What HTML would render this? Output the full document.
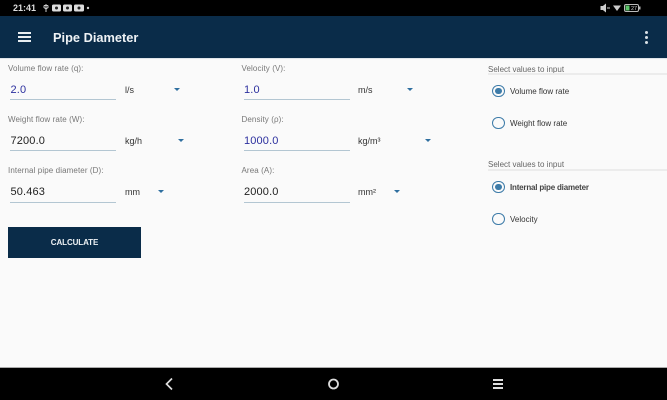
<!DOCTYPE html>
<html><head><meta charset="utf-8">
<style>
html,body{margin:0;padding:0}
body{width:667px;height:400px;position:relative;overflow:hidden;background:#000;font-family:"Liberation Sans",sans-serif}
#w{left:0;top:0;width:667px;height:400px;background:#fafafa;overflow:hidden;filter:blur(.35px)}
div,span{position:absolute;white-space:nowrap}
.lbl{font-size:8px;color:#777;line-height:10px;letter-spacing:.1px}
.val{font-size:11px;line-height:14px;color:#222;letter-spacing:.15px}
.blue{color:#2b2f9e}
.ul{height:1px;background:#b3c6d2;width:106px}
.unit{font-size:9px;line-height:12px;color:#333}
.tri{width:0;height:0;border-left:3.500px solid transparent;border-right:3.500px solid transparent;border-top:3.500px solid #2f6f9f}
.hd{font-size:8px;line-height:10px;color:#666;left:488px}
.line{left:488px;width:179px;height:2px;background:#ececec}
.r{left:492px;width:10.500px;height:10.500px;border:1.500px solid #3d7ba8;border-radius:50%}
.r i{position:absolute;left:2px;top:2px;width:6.500px;height:6.500px;border-radius:50%;background:#3d7ba8}
.rl{left:510px;font-size:8px;line-height:10px;color:#333}
</style></head><body>
<div id="w">
<div style="left:0;top:0;width:667px;height:16px;background:#000"></div>
<div style="left:13px;top:3px;font-size:9px;line-height:11px;color:#ddd;font-weight:bold">21:41</div>
<svg style="position:absolute;left:42px;top:3px" width="50" height="10" viewBox="0 0 50 10">
<path d="M4 1v8M2 2.500h4M2 2.500v2l2 1.500 2-1.500v-2" stroke="#ccc" stroke-width="1" fill="none"/>
<rect x="10" y="1.500" width="9" height="7" rx="1.500" fill="#ddd"/><rect x="21" y="1.500" width="9" height="7" rx="1.500" fill="#ddd"/><rect x="32" y="1.500" width="10" height="7" rx="1.500" fill="#ddd"/><circle cx="46" cy="5" r="1.200" fill="#ccc"/>
<circle cx="14.500" cy="5" r="1.500" fill="#222"/><circle cx="25.500" cy="5" r="1.500" fill="#222"/><circle cx="37" cy="5" r="1.500" fill="#222"/>
</svg>
<svg style="position:absolute;left:600px;top:3px" width="42" height="10" viewBox="0 0 42 10">
<path d="M1 3.500h2l2.500-2v7l-2.500-2h-2zM7 5h3" fill="#ccc" stroke="#ccc" stroke-width="1"/>
<path d="M13 2.500h8l-4 5.500z" fill="#ccc"/>
<rect x="24.500" y="1.500" width="14" height="7" rx="1.500" fill="none" stroke="#bbb"/><rect x="25.500" y="2.500" width="4" height="5" fill="#5cc56a"/><rect x="39" y="3.500" width="1.500" height="3" fill="#bbb"/>
<text x="31" y="7.200" font-size="5.500" fill="#ccc" font-family="Liberation Sans">27</text>
</svg>
<div style="left:0;top:16px;width:667px;height:42px;background:#0a2c49"></div>
<div style="left:0;top:58px;width:667px;height:1px;background:#dfe5ea"></div>
<div style="left:18px;top:32px;width:13px;height:2px;background:#e8edf0;box-shadow:0 4px 0 #e8edf0,0 8px 0 #e8edf0"></div>
<div style="left:53px;top:30px;font-size:12.800px;line-height:16px;font-weight:bold;color:#eef2f5">Pipe Diameter</div>
<div style="left:645px;top:31px;width:3px;height:3px;border-radius:50%;background:#d8e0e6;box-shadow:0 5px 0 #d8e0e6,0 10px 0 #d8e0e6"></div>

<div class="lbl" style="left:8px;top:64px">Volume flow rate (q):</div>
<div class="val blue" style="left:10.500px;top:83px">2.0</div>
<div class="ul" style="left:10px;top:99px"></div>
<div class="unit" style="left:125px;top:84px">l/s</div>
<div class="tri" style="left:174px;top:88px"></div>

<div class="lbl" style="left:8px;top:115px">Weight flow rate (W):</div>
<div class="val" style="left:10.500px;top:134px">7200.0</div>
<div class="ul" style="left:10px;top:150px"></div>
<div class="unit" style="left:125px;top:135px">kg/h</div>
<div class="tri" style="left:178px;top:139px"></div>

<div class="lbl" style="left:8px;top:166px">Internal pipe diameter (D):</div>
<div class="val" style="left:10.500px;top:185px">50.463</div>
<div class="ul" style="left:10px;top:202px"></div>
<div class="unit" style="left:125px;top:186px">mm</div>
<div class="tri" style="left:158px;top:190px"></div>

<div style="left:8px;top:227px;width:133px;height:31px;background:#0a2c49"></div>
<div style="left:8px;top:227px;width:133px;height:31px;text-align:center;font-size:8px;font-weight:bold;line-height:32px;color:#eef2f5;letter-spacing:-.1px">CALCULATE</div>

<div class="lbl" style="left:241.500px;top:64px">Velocity (V):</div>
<div class="val blue" style="left:244px;top:83px">1.0</div>
<div class="ul" style="left:244px;top:99px"></div>
<div class="unit" style="left:358px;top:84px">m/s</div>
<div class="tri" style="left:407px;top:88px"></div>

<div class="lbl" style="left:241.500px;top:115px">Density (ρ):</div>
<div class="val blue" style="left:244px;top:134px">1000.0</div>
<div class="ul" style="left:244px;top:150px"></div>
<div class="unit" style="left:358px;top:135px">kg/m³</div>
<div class="tri" style="left:425px;top:139px"></div>

<div class="lbl" style="left:241.500px;top:166px">Area (A):</div>
<div class="val" style="left:244px;top:185px">2000.0</div>
<div class="ul" style="left:244px;top:202px"></div>
<div class="unit" style="left:358px;top:186px">mm²</div>
<div class="tri" style="left:394px;top:190px"></div>

<div class="hd" style="top:64.500px">Select values to input</div>
<div class="line" style="top:73px"></div>
<div class="r" style="top:84.500px"><i></i></div>
<div class="rl" style="top:86.500px">Volume flow rate</div>
<div class="r" style="top:116.500px"></div>
<div class="rl" style="top:118.500px">Weight flow rate</div>

<div class="hd" style="top:160px">Select values to input</div>
<div class="line" style="top:169px"></div>
<div class="r" style="top:180.500px"><i></i></div>
<div class="rl" style="top:182.500px;font-weight:bold;letter-spacing:-.2px;color:#444">Internal pipe diameter</div>
<div class="r" style="top:212.500px"></div>
<div class="rl" style="top:214.500px">Velocity</div>

<div style="left:0;top:367px;width:667px;height:1px;background:#aaa"></div>
<div style="left:0;top:368px;width:667px;height:32px;background:#000"></div>
<svg style="position:absolute;left:160px;top:375px" width="350" height="18" viewBox="0 0 350 18">
<path d="M12 3.500L6.500 9l5.500 5.500" stroke="#ddd" stroke-width="1.700" fill="none"/>
<circle cx="173.500" cy="9" r="4.500" stroke="#ddd" stroke-width="1.800" fill="none"/>
<path d="M333 5h10M333 9h10M333 13h10" stroke="#ddd" stroke-width="2" fill="none"/>
</svg>
</div>
</body></html>
